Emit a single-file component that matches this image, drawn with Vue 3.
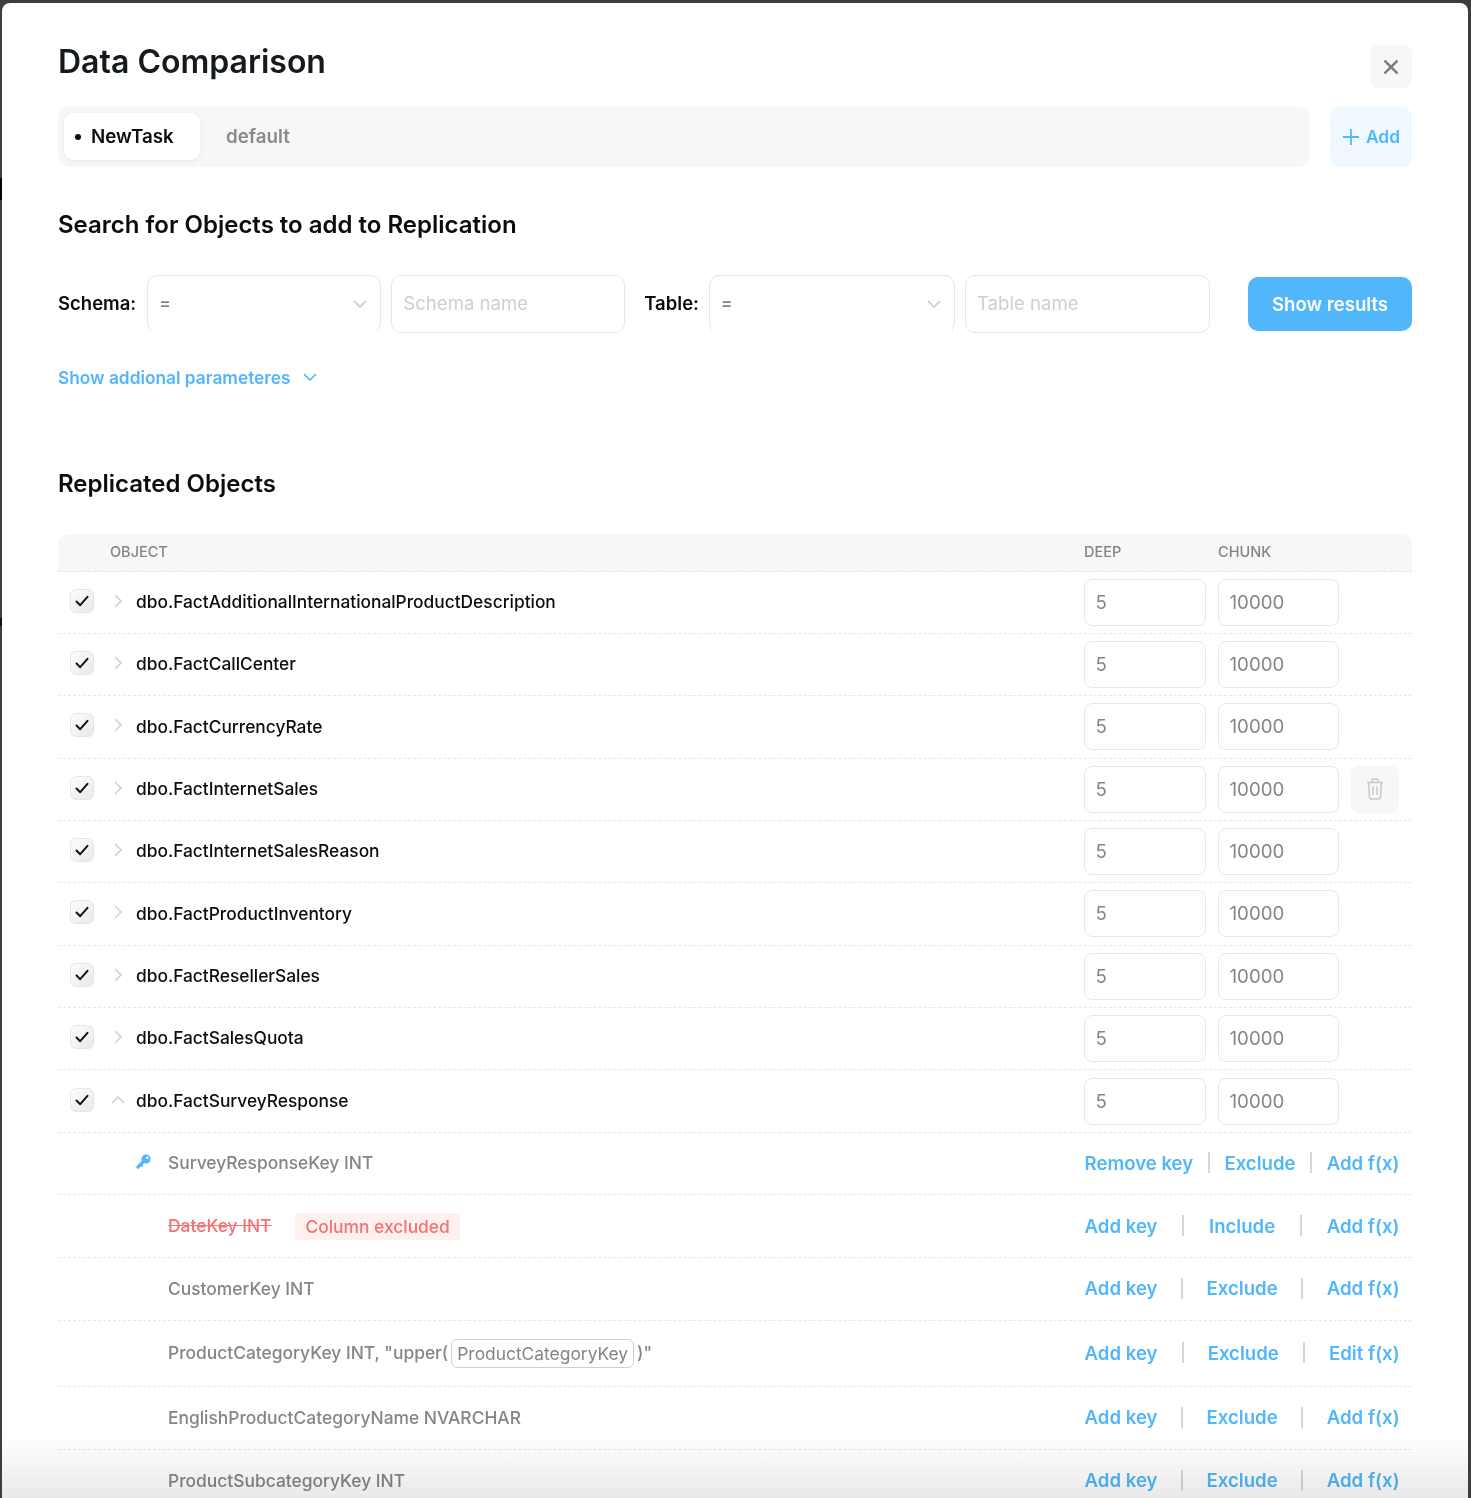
<script setup>
const objects = [
  'dbo.FactAdditionalInternationalProductDescription',
  'dbo.FactCallCenter',
  'dbo.FactCurrencyRate',
  'dbo.FactInternetSales',
  'dbo.FactInternetSalesReason',
  'dbo.FactProductInventory',
  'dbo.FactResellerSales',
  'dbo.FactSalesQuota',
  'dbo.FactSurveyResponse',
]
const columns = [
  { name: 'SurveyResponseKey INT', keyed: true, a: 'Remove key', b: 'Exclude', c: 'Add f(x)' },
  { name: 'DateKey INT', excluded: true, a: 'Add key', b: 'Include', c: 'Add f(x)' },
  { name: 'CustomerKey INT', a: 'Add key', b: 'Exclude', c: 'Add f(x)' },
  { name: 'ProductCategoryKey INT, "upper(', fx: true, a: 'Add key', b: 'Exclude', c: 'Edit f(x)' },
  { name: 'EnglishProductCategoryName NVARCHAR', a: 'Add key', b: 'Exclude', c: 'Add f(x)' },
  { name: 'ProductSubcategoryKey INT', a: 'Add key', b: 'Exclude', c: 'Add f(x)' },
]
</script>

<template>
  <div class="page">
    <div class="modal">
      <header class="head">
        <h1>Data Comparison</h1>
        <button class="close" aria-label="Close">
          <svg width="14" height="14" viewBox="0 0 14 14"><path d="M1.3 1.3l11.400 11.400M12.700 1.300l-11.400 11.400" stroke="#7f7f7f" stroke-width="2.600" stroke-linecap="round" fill="none"/></svg>
        </button>
      </header>

      <div class="tabs-row">
        <div class="tabs">
          <div class="tab active"><span class="dot"></span>NewTask</div>
          <div class="tab">default</div>
        </div>
        <button class="add">
          <svg width="18" height="18" viewBox="0 0 18 18"><path d="M9 1v16M1 9h16" stroke="#52b6fb" stroke-width="1.800" fill="none"/></svg>
          <span class="add-label">Add</span>
        </button>
      </div>

      <h2 class="search-title">Search for Objects to add to Replication</h2>

      <div class="filters">
        <span class="flabel">Schema:</span>
        <div class="field select w234"><span class="eq">=</span>
          <svg class="fchev" width="14" height="8" viewBox="0 0 14 8"><path d="M1 1l6 6 6-6" stroke="#c8c8c8" stroke-width="1.500" fill="none"/></svg>
        </div>
        <div class="field ph w234">Schema name</div>
        <span class="flabel l2">Table:</span>
        <div class="field select w246"><span class="eq">=</span>
          <svg class="fchev" width="14" height="8" viewBox="0 0 14 8"><path d="M1 1l6 6 6-6" stroke="#c8c8c8" stroke-width="1.500" fill="none"/></svg>
        </div>
        <div class="field ph w245">Table name</div>
        <button class="show">Show results</button>
      </div>

      <div class="more">Show addional parameteres
        <svg width="14" height="8" viewBox="0 0 14 8"><path d="M1 1l6 6 6-6" stroke="#52b6fb" stroke-width="1.600" fill="none"/></svg>
      </div>

      <h2 class="rep-title">Replicated Objects</h2>

      <div class="thead">
        <span class="th-obj">OBJECT</span>
        <span class="th-deep">DEEP</span>
        <span class="th-chunk">CHUNK</span>
      </div>

      <div v-for="(o, i) in objects" :key="o" class="row">
        <span class="check">
          <svg width="14" height="12" viewBox="0 0 14 12"><path d="M1.500 6.500l3.700 3.700L12.500 1.800" stroke="#111" stroke-width="2" fill="none" stroke-linecap="round" stroke-linejoin="round"/></svg>
        </span>
        <span class="chev">
          <svg v-if="i < 8" width="8" height="14" viewBox="0 0 8 14"><path d="M1 1l6 6-6 6" stroke="#d2d2d2" stroke-width="1.600" fill="none"/></svg>
          <svg v-else width="14" height="8" viewBox="0 0 14 8"><path d="M1 7l6-6 6 6" stroke="#d2d2d2" stroke-width="1.600" fill="none"/></svg>
        </span>
        <span class="oname">{{ o }}</span>
        <div class="num deep">5</div>
        <div class="num chunk">10000</div>
        <div class="trash-slot">
          <button v-if="i === 3" class="trash" aria-label="Delete">
            <svg width="18" height="22" viewBox="0 0 18 22" fill="none" stroke="#c9c9c9" stroke-width="1.500"><path d="M1 4.500h16M6 4.500V2.200C6 1.500 6.500 1 7.200 1h3.600c.7 0 1.200.5 1.200 1.200v2.300M2.600 4.500l.9 14.400c.1 1.200.9 2.100 2.100 2.100h6.800c1.200 0 2-.9 2.100-2.100l.9-14.400M7 8.500v8.500M11 8.500v8.500"/></svg>
          </button>
        </div>
      </div>

      <div v-for="c in columns" :key="c.name" class="crow" :class="{ tall: c.fx }">
        <svg v-if="c.keyed" class="keyi" width="15" height="15" viewBox="0 0 15 15">
          <circle cx="10" cy="5" r="4.600" fill="#52b6fb"/>
          <circle cx="11.200" cy="3.800" r="1.200" fill="#fff"/>
          <path d="M7 8l-5 5" stroke="#52b6fb" stroke-width="3.200" stroke-linecap="round" fill="none"/>
          <path d="M4.500 10.500l1.800 1.500" stroke="#52b6fb" stroke-width="1.800" stroke-linecap="round" fill="none"/>
        </svg>
        <span class="cname" :class="{ struck: c.excluded }">{{ c.name }}</span>
        <template v-if="c.fx">
          <span class="fxbox">ProductCategoryKey</span><span class="cname fxend">)"</span>
        </template>
        <span v-if="c.excluded" class="badge">Column excluded</span>
        <div class="actions">
          <a>{{ c.a }}</a><i></i><a>{{ c.b }}</a><i></i><a>{{ c.c }}</a>
        </div>
      </div>

      <div class="fade"></div>
    </div>
  </div>
</template>

<style>
html, body { margin: 0; background: #3d3d3d; overflow: hidden; }
</style>

<style scoped>
.page {
  width: 1471px;
  height: 1498px;
  overflow: hidden;
  padding: 3px 3px 0 2px;
  box-sizing: border-box;
  font-family: Inter, "Liberation Sans", sans-serif;
  background:
    linear-gradient(#050505, #050505) 0 178px / 2px 22px no-repeat,
    linear-gradient(#111, #111) 0 618px / 2px 8px no-repeat,
    #3d3d3d;
}
.modal {
  position: relative;
  height: 1495px;
  background: #fff;
  border-radius: 8px 8px 0 0;
  padding: 0 56px;
  box-sizing: border-box;
  overflow: hidden;
}
.head {
  display: flex;
  justify-content: space-between;
  align-items: flex-start;
  height: 104px;
}
h1 {
  margin: 38px 0 0;
  font-size: 32px;
  line-height: 42px;
  font-weight: 600;
  color: #141a1f;
}
.close {
  margin-top: 42px;
  width: 42px;
  height: 43px;
  border: 0;
  border-radius: 8px;
  background: #f6f7f7;
  display: flex;
  align-items: center;
  justify-content: center;
  padding: 0;
}
.tabs-row { display: flex; gap: 20px; }
.tabs {
  flex: 1;
  height: 60px;
  background: #f6f7f7;
  border-radius: 10px;
  padding: 6px;
  box-sizing: border-box;
  display: flex;
  gap: 0;
}
.tab {
  height: 47px;
  width: 136px;
  padding-left: 26px;
  box-sizing: border-box;
  display: flex;
  align-items: center;
  font-size: 18.800px;
  font-weight: 600;
  color: #8a8a8a;
}
.tab.active {
  position: relative;
  background: #fff;
  border-radius: 10px;
  color: #0c0c0c;
  padding-left: 27px;
  box-shadow: 0 2px 6px rgba(0, 0, 0, 0.05);
}
.dot {
  position: absolute;
  left: 11px;
  top: 21px;
  width: 6px;
  height: 6px;
  border-radius: 50%;
  background: #0c0c0c;
}
.add {
  width: 82px;
  height: 60px;
  border: 0;
  border-radius: 10px;
  background: #eff8ff;
  color: #52b6fb;
  font: 600 17.400px Inter, sans-serif;
  display: flex;
  align-items: center;
  justify-content: center;
  gap: 6px;
  padding: 0;
}
.add-label { padding-bottom: 2px; }
.search-title {
  margin: 42px 0 0;
  font-size: 24px;
  line-height: 32px;
  font-weight: 600;
  color: #0c0c0c;
}
.filters {
  margin-top: 34px;
  display: flex;
  align-items: center;
  height: 58px;
}
.flabel { font-size: 18.500px; line-height: 24px; padding-bottom: 2px; font-weight: 600; color: #0c0c0c; margin-right: 11px; }
.flabel.l2 { margin-left: 9px; margin-right: 10px; }
.field {
  position: relative;
  height: 58px;
  box-sizing: border-box;
  border: 1px solid #e8e8e8;
  border-radius: 10px;
  display: flex;
  align-items: center;
  padding-left: 11px;
  padding-bottom: 2px;
  font-size: 18.600px;
  color: #cfcfcf;
  margin-right: 10px;
}
.select { border-bottom-color: #fff; }
.w234 { width: 234px; }
.w246 { width: 246px; }
.w245 { width: 245px; margin-right: 0; }
.eq { color: #858585; font-size: 17px; font-weight: 600; }
.fchev { position: absolute; right: 13px; top: 24px; }
.show {
  margin-left: auto;
  width: 164px;
  height: 54px;
  border: 0;
  border-radius: 10px;
  background: #52b6fb;
  color: #fff;
  font: 600 18.600px Inter, sans-serif;
  padding: 0;
}
.more {
  margin-top: 32px;
  display: flex;
  align-items: center;
  gap: 13px;
  height: 24px;
  font-size: 17.300px;
  font-weight: 600;
  color: #52b6fb;
}
.rep-title {
  margin: 79px 0 0;
  font-size: 24px;
  line-height: 32px;
  font-weight: 600;
  color: #0c0c0c;
}
.thead {
  margin-top: 34px;
  height: 36.600px;
  padding-bottom: 0;
  background: #f6f7f7;
  border-radius: 10px 10px 0 0;
  display: flex;
  align-items: flex-start;
  line-height: 36px;
  font-size: 14.500px;
  font-weight: 500;
  color: #858585;
  border-bottom: 1px dashed #e6e6e6;
  box-sizing: content-box;
}
.th-obj { margin-left: 52px; width: 974px; }
.th-deep { width: 134px; }
.row {
  height: 61.350px;
  border-bottom: 1px dashed #e6e6e6;
  display: flex;
  align-items: center;
}
.check {
  margin-left: 12px;
  width: 24px;
  height: 24px;
  box-sizing: border-box;
  border: 1px solid #e6e6e6;
  border-radius: 6px;
  background: linear-gradient(135deg, #fdfdfd, #e9e9e9);
  display: flex;
  align-items: center;
  justify-content: center;
  margin-bottom: 3px;
}
.chev {
  width: 14px;
  margin-left: 17px;
  margin-bottom: 3px;
  display: flex;
  justify-content: center;
}
.oname {
  margin-left: 11px;
  padding-bottom: 1.500px;
  flex: 1;
  font-size: 17.330px;
  font-weight: 500;
  color: #0c0c0c;
}
.num {
  height: 47px;
  box-sizing: border-box;
  border: 1px solid #e8e8e8;
  border-radius: 8px;
  display: flex;
  align-items: center;
  padding-left: 10.500px;
  font-size: 18.700px;
  color: #858585;
}
.deep { width: 122px; margin-right: 12px; }
.chunk { width: 121px; }
.trash-slot { width: 73px; display: flex; padding-left: 12px; box-sizing: border-box; }
.trash {
  width: 48px;
  height: 47px;
  border: 0;
  border-radius: 8px;
  background: #f6f7f7;
  display: flex;
  align-items: center;
  justify-content: center;
  padding: 0;
}
.crow {
  position: relative;
  height: 60.300px;
  padding-bottom: 1.500px;
  border-bottom: 1px dashed #e6e6e6;
  display: flex;
  align-items: center;
  padding-left: 110px;
  font-size: 17.400px;
  font-weight: 500;
  color: #858585;
}
.crow.tall { height: 63.500px; }
.keyi { position: absolute; left: 78px; top: 21px; }
.cname { white-space: pre; }
.struck { color: #f47272; text-decoration: line-through; }
.fxbox {
  margin-left: 3px;
  margin-top: 1.500px;
  height: 29px;
  padding: 0 5px;
  box-sizing: border-box;
  border: 1px solid #cfcfcf;
  border-radius: 6px;
  display: flex;
  align-items: center;
  font-weight: 400;
}
.fxend { margin-left: 3px; }
.badge {
  margin-left: 24px;
  margin-top: 1.500px;
  height: 27px;
  padding: 0 10px;
  display: flex;
  align-items: center;
  border-radius: 3px;
  background: #fff0f0;
  color: #f47272;
}
.actions {
  position: absolute;
  left: 1026.600px;
  width: 315px;
  display: flex;
  justify-content: space-between;
  align-items: center;
  font-size: 18.600px;
  font-weight: 600;
  color: #52b6fb;
}
.actions i { width: 2px; height: 21px; background: #d6d6d6; }
.fade {
  position: absolute;
  left: 0;
  right: 0;
  bottom: 0;
  height: 62px;
  background: linear-gradient(#fff, #e9e9e9);
  mix-blend-mode: multiply;
  pointer-events: none;
}
</style>
